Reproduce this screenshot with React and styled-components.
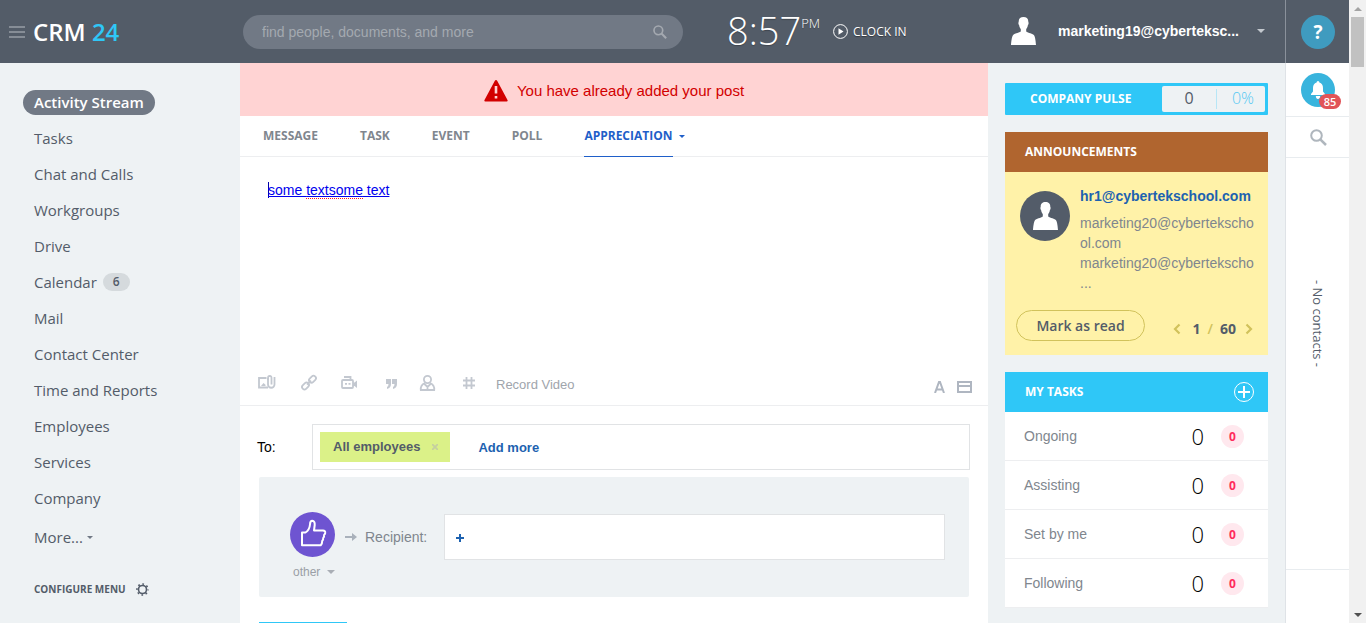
import React from "react";
import styled, { createGlobalStyle, css } from "styled-components";

const sans = `"Open Sans", "Noto Sans", sans-serif`;
const arial = `"Liberation Sans", Arial, sans-serif`;

const Global = createGlobalStyle`
  *, *::before, *::after { box-sizing: border-box; }
  body { margin: 0; background: #eef2f4; font-family: ${sans}; color: #535c69; }
  button { border: 0; padding: 0; background: none; font: inherit; color: inherit; cursor: pointer; }
  a { color: inherit; text-decoration: none; }
  h2 { margin: 0; }
  svg { display: block; flex: none; }
`;

const Window = styled.div`
  display: grid;
  grid-template-columns: minmax(0, 1fr) 64px 17px;
  grid-template-rows: minmax(0, 1fr);
  height: 100vh;
  overflow: hidden;
`;

const Portal = styled.div`
  display: flex;
  flex-direction: column;
  min-height: 0;
`;

/* Header */
const Header = styled.header`
  display: flex;
  align-items: center;
  flex: none;
  height: 63px;
  background: #535c68;
  color: #fff;
`;

const Brand = styled.div`
  display: flex;
  align-items: center;
  gap: 8px;
  width: 243px;
  padding-left: 9px;
`;

const Logo = styled.a`
  font-size: 24px;
  line-height: 32px;
  font-weight: 600;
  span { color: #2fc7f7; }
`;

const Search = styled.label`
  display: flex;
  align-items: center;
  width: 440px;
  height: 34px;
  padding: 0 16px 0 19px;
  border-radius: 17px;
  background: #717985;
  input {
    flex: 1;
    min-width: 0;
    padding: 0;
    border: 0;
    outline: 0;
    background: none;
    color: #fff;
    font: 14px/18px ${arial};
  }
  input::placeholder { color: #a4a9b0; opacity: 1; }
`;

const Clock = styled.div`
  display: flex;
  align-items: flex-start;
  width: 150px;
  padding: 0 0 4px 44px;
  text-shadow: 0 1px 1px rgba(0, 0, 0, 0.25);
`;

const Time = styled.span`
  font-size: 38px;
  line-height: 60px;
  font-weight: 300;
`;

const Meridiem = styled.span`
  padding-top: 14px;
  font-size: 13px;
  line-height: 18px;
  font-weight: 300;
`;

const ClockIn = styled.button`
  display: flex;
  align-items: center;
  gap: 5px;
  font-size: 12px;
  line-height: 18px;
  text-shadow: 0 1px 1px rgba(0, 0, 0, 0.4);
`;

const User = styled.button`
  display: flex;
  align-items: center;
  margin-left: auto;
  padding: 0 20px 2px 0;
  font: bold 14px/18px ${arial};
`;

const UserName = styled.span`
  min-width: 184px;
  margin: 0 15px 0 22px;
  text-align: left;
`;

/* Columns */
const Columns = styled.div`
  display: grid;
  grid-template-columns: 240px minmax(0, 1fr) 297px;
  grid-template-rows: minmax(0, 1fr);
  flex: 1;
  min-height: 0;
`;

const Menu = styled.nav`
  padding: 21px 23px;
`;

const MenuItem = styled.a`
  display: flex;
  align-items: center;
  width: max-content;
  height: 36px;
  padding-left: 11px;
  font-size: 15px;
  line-height: 25px;
`;

const ActiveLabel = styled.span`
  margin-left: -11px;
  padding: 0 11px;
  border-radius: 13px;
  background: #717985;
  color: #fff;
  font-weight: 600;
`;

const Counter = styled.span`
  margin-left: 6px;
  padding: 0 10px;
  border-radius: 9px;
  background: #d5dadd;
  font-size: 12px;
  line-height: 18px;
  font-weight: 600;
`;

const MoreItem = styled(MenuItem)`
  gap: 4px;
  margin-top: 3px;
`;

const Configure = styled.button`
  display: flex;
  align-items: center;
  gap: 10px;
  margin-top: 25px;
  padding-left: 11px;
  font-size: 10px;
  line-height: 18px;
  font-weight: 700;
`;

const Main = styled.main`
  overflow: hidden;
  background: #fff;
`;

const Alert = styled.div`
  display: flex;
  align-items: center;
  justify-content: center;
  gap: 9px;
  height: 53px;
  padding-top: 2px;
  background: #ffd3d3;
  color: #d20000;
  font: 15px/20px ${arial};
`;

const Tabs = styled.div`
  display: flex;
  align-items: flex-start;
  gap: 42px;
  height: 41px;
  padding-left: 23px;
  border-bottom: 1px solid #edeef0;
`;

const Tab = styled.button`
  display: flex;
  align-items: center;
  height: 41px;
  border-bottom: 1px solid transparent;
  color: #80868e;
  font-size: 12px;
  line-height: 18px;
  font-weight: 700;
  ${(p) => p.$active && css`
    color: #1f5fc9;
    border-color: #1f5fc9;
  `}
`;

const TabGroup = styled.div`
  display: flex;
  align-items: center;
  gap: 6px;
`;

const Editor = styled.div`
  height: 204px;
  padding: 24px 28px;
  outline: 0;
  font: 14px/18px ${arial};
  a { color: #0000ee; text-decoration: underline; text-decoration-skip-ink: none; }
`;

const Caret = styled.span`
  border-left: 1px solid #0000aa;
  margin-right: -1px;
`;

const Misspelt = styled.span`
  border-bottom: 1px dotted #ff2020;
`;

const Tools = styled.div`
  display: flex;
  align-items: center;
  height: 45px;
  padding: 0 16px 0 18px;
  border-bottom: 1px solid #edeef0;
  color: #c3c8d0;
`;

const ToolList = styled.div`
  display: flex;
  align-items: center;
  justify-content: space-between;
  width: 217px;
`;

const RecordVideo = styled.button`
  margin-left: 21px;
  padding-top: 4px;
  color: #a0a5ac;
  font: 13px/18px ${arial};
`;

const ToolsRight = styled.div`
  display: flex;
  align-items: center;
  gap: 12px;
  margin-left: auto;
  padding-top: 8px;
  color: #afb6c1;
`;

const ToRow = styled.div`
  display: flex;
  align-items: center;
  padding: 18px 18px 7px 17px;
  color: #000;
  font: 14px/18px ${arial};
`;

const ToLabel = styled.span`
  width: 55px;
`;

const Field = styled.div`
  display: flex;
  align-items: center;
  flex: 1;
  height: 46px;
  padding: 0 7px;
  border: 1px solid #e1e3e5;
  background: #fff;
`;

const Chip = styled.span`
  display: flex;
  align-items: center;
  gap: 12px;
  height: 30px;
  padding: 0 12px 0 13px;
  background: #dbf188;
  color: #535c69;
  font: bold 13px/18px ${arial};
`;

const AddLink = styled.button`
  margin-left: ${(p) => (p.$first ? "4px" : "28px")};
  padding-top: 2px;
  color: #1d62b0;
  font: bold 13px/18px ${arial};
`;

const Appreciation = styled.section`
  display: flex;
  align-items: flex-start;
  height: 120px;
  margin: 0 19px;
  padding: 35px 24px 0 31px;
  border-radius: 2px;
  background: #eef2f4;
`;

const Medal = styled.button`
  display: flex;
  flex-direction: column;
  gap: 6px;
  width: 45px;
  color: #9a9fa6;
  font: 12px/18px ${arial};
`;

const MedalName = styled.span`
  display: flex;
  align-items: center;
  gap: 7px;
  padding-left: 3px;
`;

const RecipientLabel = styled.span`
  display: flex;
  align-items: center;
  gap: 8px;
  height: 50px;
  margin: 0 17px 0 10px;
  color: #80868e;
  font: 14px/18px ${arial};
`;

const RecipientField = styled(Field)`
  margin-top: 2px;
`;

const Submit = styled.button`
  display: block;
  width: 88px;
  height: 38px;
  margin: 25px 19px;
  background: #2fc7f7;
`;

/* Right column */
const Aside = styled.aside`
  display: flex;
  flex-direction: column;
  gap: 17px;
  padding: 20px 17px;
`;

const Pulse = styled.section`
  display: flex;
  align-items: center;
  justify-content: space-between;
  flex: none;
  height: 32px;
  padding: 0 3px 0 25px;
  background: #2fc7f7;
  border-radius: 1px;
  color: #fff;
`;

const WidgetTitle = styled.h2`
  font-size: 12px;
  line-height: 18px;
  font-weight: 700;
`;

const PulseBox = styled.div`
  display: grid;
  grid-template-columns: 54px 49px;
  height: 26px;
  border-radius: 2px;
  background: #eef2f4;
  color: #535c69;
  font-size: 16px;
  line-height: 24px;
  text-align: center;
`;

const PulseRate = styled.span`
  height: 20px;
  margin-top: 3px;
  padding-left: 4px;
  border-left: 1px solid #b7e6f6;
  color: #55c8f3;
  line-height: 18px;
  font-weight: 300;
`;

const WidgetHead = styled.div`
  display: flex;
  align-items: center;
  justify-content: space-between;
  height: 40px;
  padding: 0 14px 0 20px;
  background: ${(p) => p.$color};
  color: #fff;
`;

const Notice = styled.div`
  height: 183px;
  padding: 14px 11px 0;
  background: #fff2a8;
`;

const NoticeBody = styled.div`
  display: flex;
  gap: 10px;
  height: 124px;
  padding-left: 4px;
  font: 14px/20px ${arial};
  color: #80868e;
`;

const Avatar = styled.span`
  display: flex;
  align-items: center;
  justify-content: center;
  flex: none;
  width: 50px;
  height: 50px;
  margin-top: 5px;
  border-radius: 50%;
  background: #535c69;
`;

const Author = styled.a`
  display: block;
  margin-bottom: 7px;
  color: #1d62b0;
  font-weight: bold;
`;

const NoticeFoot = styled.div`
  display: flex;
  align-items: center;
  justify-content: space-between;
  padding-right: 4px;
`;

const ReadButton = styled.button`
  width: 129px;
  height: 31px;
  border: 1px solid #d1c25b;
  border-radius: 16px;
  font-size: 14px;
  line-height: 18px;
  font-weight: 600;
`;

const Pager = styled.div`
  display: flex;
  align-items: center;
  padding-top: 6px;
  color: #d1c25b;
  font-size: 14px;
  line-height: 18px;
  font-weight: 600;
`;

const PageCount = styled.span`
  display: flex;
  gap: 7px;
  margin: 0 9px 0 12px;
  b { color: #535c69; font-weight: 700; }
`;

const TaskRow = styled.a`
  display: flex;
  align-items: center;
  height: 49px;
  padding: 0 24px 0 19px;
  border-bottom: 1px solid #edeef0;
  background: #fff;
  color: #80868e;
  font: 14px/18px ${arial};
`;

const TaskCount = styled.span`
  margin: 0 17px 0 auto;
  color: #000;
  font: 300 22px/28px ${sans};
`;

const TaskBadge = styled.span`
  width: 23px;
  border-radius: 50%;
  background: #ffe8ee;
  color: #ff2b5c;
  text-align: center;
  font: 700 12px/23px ${sans};
`;

/* Messenger rail */
const Rail = styled.div`
  display: flex;
  flex-direction: column;
  align-items: stretch;
  min-height: 0;
  border-left: 1px solid #dfe3e7;
  background: #fff;
`;

const RailCell = styled.div`
  display: flex;
  align-items: center;
  justify-content: center;
  flex: none;
  height: ${(p) => p.$height};
  padding-left: 1px;
  border-bottom: 1px solid #e8ecef;
`;

const RailTop = styled(RailCell)`
  margin-left: -1px;
  border-left: 1px solid #8a919b;
  border-bottom: 0;
  background: #535c68;
`;

const Round = styled.button`
  position: relative;
  display: flex;
  align-items: center;
  justify-content: center;
  width: 34px;
  height: 34px;
  border-radius: 50%;
  background: ${(p) => p.$color};
  color: #fff;
  font-size: 19px;
  line-height: 34px;
  font-weight: 700;
`;

const Unread = styled.span`
  position: absolute;
  right: -6px;
  bottom: -2px;
  width: 22px;
  border-radius: 8px;
  background: #e15458;
  font-size: 11px;
  line-height: 15px;
  font-weight: 600;
`;

const Contacts = styled.div`
  display: flex;
  align-items: center;
  justify-content: center;
  flex: 1;
  min-height: 0;
  border-bottom: 1px solid #e8ecef;
  span {
    writing-mode: vertical-rl;
    padding-bottom: 79px;
    font-size: 13px;
    line-height: 18px;
  }
`;

const RailBottom = styled.div`
  flex: none;
  height: 53px;
`;

const ScrollTrack = styled.div`
  display: flex;
  flex-direction: column;
  align-items: center;
  background: #f1f1f1;
`;

const ScrollArrow = styled.div`
  display: flex;
  align-items: center;
  justify-content: center;
  width: 17px;
  height: 17px;
`;

const ScrollThumb = styled.div`
  width: 13px;
  height: 50px;
  margin-bottom: auto;
  background: #c1c1c1;
`;

/* Icons */
const Triangle = ({ w = 6, h = 3, color = "currentColor", up }) => (
  <svg width={w} height={h} viewBox="0 0 6 3" fill={color} aria-hidden="true">
    <path d={up ? "M0 3 3 0l3 3z" : "M0 0h6L3 3z"} />
  </svg>
);

const Person = ({ w, h }) => (
  <svg width={w} height={h} viewBox="0 0 25 28" fill="#fff" aria-hidden="true">
    <path d="M12.5 0C9.500 0 7.500 1.500 7.700 5c-.6.500-.3 2.600.4 3 .2 1.800.8 3 1.700 4v2.500C8 16 3 16.500 1.800 18.500.8 20 .2 25 0 28h25c-.2-3-.8-8-1.800-9.500C22 16.500 17 16 15.200 14.500V12c.9-1 1.500-2.200 1.700-4 .7-.4 1-2.500.4-3C17.500 1.500 15.500 0 12.500 0z" />
  </svg>
);

const Magnifier = ({ size, color, width = 2 }) => (
  <svg width={size} height={size} viewBox="0 0 17 17" fill="none" stroke={color} strokeWidth={width} aria-hidden="true">
    <circle cx="6.500" cy="6.500" r="5.300" />
    <path d="M10.300 10.300 16 16" strokeWidth={width + 0.5} />
  </svg>
);

const Chevron = ({ d }) => (
  <svg width="8" height="12" viewBox="0 0 8 12" fill="none" stroke="#d1c25b" strokeWidth="2.200" aria-hidden="true">
    <path d={d} />
  </svg>
);

const toolIcons = [
  ["Attach file", 18, <><path d="M8.500 3H1v9.500h9" /><path d="M3 11l2.500-3 2 1.800V11z" fill="currentColor" stroke="none" /><path d="M10 3v6.500a3 3 0 0 0 6.500 0V2" /><path d="M10 5V3.200q0-2.200 1.800-2.200t1.700 2.200V9.500" /></>],
  ["Link", 16, <><rect x="-3.800" y="-2.400" width="7.600" height="4.800" rx="2.200" transform="translate(4.500 11) rotate(-45)" /><rect x="-3.800" y="-2.400" width="7.600" height="4.800" rx="2.200" transform="translate(11.500 4.200) rotate(-45)" /><path d="M6 9.600l4-4" /></>],
  ["Video", 17, <><rect x="0" y="5" width="11" height="8" rx="1" /><path d="M2 2h6.500v2.500" /><path d="M11 7.500h1.500L15 5.500v7.500l-2.500-2H11z" fill="currentColor" stroke="none" /><path d="M3 8.800h2M6.500 8.800h2" /></>],
  ["Quote", 13, <path d="M2 4h5v5q0 4-4 5v-2q1.500-.7 1.500-3H2zM8 4h5v5q0 4-4 5v-2q1.500-.7 1.500-3H8z" fill="currentColor" stroke="none" />],
  ["Mention", 16, <><circle cx="5.500" cy="4.500" r="3.600" /><path d="M3 8Q-1.700 10-1.200 15h13.400Q12.700 10 8 8M2.500 9l3 3 3-3M5.500 12v3" /></>],
  ["Tag", 12, <path d="M3.500 2v12M8.500 2v12M0 5.500h12M0 10.500h12" />],
];

const ToolIcon = ({ label, w, children }) => (
  <button aria-label={label}>
    <svg width={w} height="16" viewBox={`0 0 ${w} 16`} fill="none" stroke="currentColor" strokeWidth="1.800" overflow="visible">
      {children}
    </svg>
  </button>
);

const menu = ["Tasks", "Chat and Calls", "Workgroups", "Drive", "Calendar", "Mail", "Contact Center", "Time and Reports", "Employees", "Services", "Company"];
const tabs = ["MESSAGE", "TASK", "EVENT", "POLL"];
const tasks = ["Ongoing", "Assisting", "Set by me", "Following"];

export default function App() {
  return (
    <>
      <Global />
      <Window>
        <Portal>
          <Header>
            <Brand>
              <button aria-label="Toggle menu">
                <svg width="16" height="12" viewBox="0 0 16 12" stroke="#868d96" strokeWidth="2">
                  <path d="M0 1h16M0 6h16M0 11h16" />
                </svg>
              </button>
              <Logo href="#">CRM <span>24</span></Logo>
            </Brand>
            <Search>
              <input aria-label="Search" placeholder="find people, documents, and more" />
              <Magnifier size={14} color="#a4a9b0" />
            </Search>
            <Clock>
              <Time>8:57</Time>
              <Meridiem>PM</Meridiem>
            </Clock>
            <ClockIn>
              <svg width="15" height="15" viewBox="0 0 15 15" fill="#fff" aria-hidden="true">
                <circle cx="7.500" cy="7.500" r="6.900" fill="none" stroke="#fff" />
                <path d="M5.500 4.200v6.600L10.500 7.500z" />
              </svg>
              CLOCK IN
            </ClockIn>
            <User>
              <Person w={25} h={28} />
              <UserName>marketing19@cyberteksc...</UserName>
              <Triangle w={8} h={4} color="#c3c8ce" />
            </User>
          </Header>
          <Columns>
            <Menu>
              <MenuItem href="#"><ActiveLabel>Activity Stream</ActiveLabel></MenuItem>
              {menu.map((name) => (
                <MenuItem href="#" key={name}>
                  {name}
                  {name === "Calendar" && <Counter>6</Counter>}
                </MenuItem>
              ))}
              <MoreItem href="#">More... <Triangle color="#717985" /></MoreItem>
              <Configure>
                CONFIGURE MENU
                <svg width="13" height="13" viewBox="0 0 13 13" fill="none" stroke="#535c69" aria-hidden="true">
                  <circle cx="6.500" cy="6.500" r="4" strokeWidth="1.600" />
                  <circle cx="6.500" cy="6.500" r="5.500" strokeWidth="1.600" strokeDasharray="1.700 2.620" strokeDashoffset=".85" />
                </svg>
              </Configure>
            </Menu>
            <Main>
              <Alert role="alert">
                <svg width="24" height="22" viewBox="0 0 24 22" fill="#d20000" aria-hidden="true">
                  <path d="M12 0q.8 0 1.300 1L23.500 20q.6 1.500-.8 1.500H1.300Q-.1 21.500.5 20L10.700 1Q11.200 0 12 0z" />
                  <path d="M12 6v7.500M12 16v2.600" stroke="#ffd3d3" strokeWidth="2.600" />
                </svg>
                You have already added your post
              </Alert>
              <Tabs>
                {tabs.map((name) => <Tab key={name}>{name}</Tab>)}
                <TabGroup>
                  <Tab $active>APPRECIATION</Tab>
                  <Triangle color="#1f5fc9" />
                </TabGroup>
              </Tabs>
              <Editor contentEditable suppressContentEditableWarning spellCheck={false} role="textbox" aria-label="Post text">
                <Caret /><a href="#">some <Misspelt>textsome</Misspelt> text</a>
              </Editor>
              <Tools>
                <ToolList>
                  {toolIcons.map(([label, w, art]) => <ToolIcon key={label} label={label} w={w}>{art}</ToolIcon>)}
                </ToolList>
                <RecordVideo>Record Video</RecordVideo>
                <ToolsRight>
                  <button aria-label="Text format">
                    <svg width="11" height="12" viewBox="0 0 11 12" fill="none" stroke="currentColor" strokeWidth="2">
                      <path d="M1 12 5 1h1l4 11M2.500 8.500h6" />
                    </svg>
                  </button>
                  <button aria-label="Topic">
                    <svg width="15" height="12" viewBox="0 0 15 12" fill="none" stroke="currentColor" strokeWidth="2">
                      <path d="M1 1h13v10H1zM1 5h13" />
                    </svg>
                  </button>
                </ToolsRight>
              </Tools>
              <ToRow>
                <ToLabel>To:</ToLabel>
                <Field>
                  <Chip>
                    All employees
                    <svg width="6" height="6" viewBox="0 0 6 6" stroke="#c5cfa0" strokeWidth="1.800" aria-hidden="true">
                      <path d="M0 0l6 6M6 0 0 6" />
                    </svg>
                  </Chip>
                  <AddLink>Add more</AddLink>
                </Field>
              </ToRow>
              <Appreciation>
                <Medal>
                  <svg width="45" height="45" viewBox="0 0 45 45" aria-hidden="true">
                    <circle cx="22.500" cy="22.500" r="22.500" fill="#6e54d1" />
                    <path d="M12 20.500h3.500Q19.500 18 20 12.500 20 8.800 22.300 8.800 25 9 24.700 13L24 18.500H33q2.500.2 2.200 2.500-.2 1.300-1.200 2 .5 1.800-.8 3 .2 1.800-1 3 .1 2.500-1.500 4.300H12z" fill="none" stroke="#fff" strokeWidth="2" strokeLinejoin="round" />
                  </svg>
                  <MedalName>other <Triangle w={8} h={4} color="#a9aeb5" /></MedalName>
                </Medal>
                <RecipientLabel>
                  <svg width="12" height="8" viewBox="0 0 12 8" aria-hidden="true">
                    <path d="M0 3h7V0l5 4-5 4V5H0z" fill="#a9b1bb" />
                  </svg>
                  Recipient:
                </RecipientLabel>
                <RecipientField>
                  <AddLink $first aria-label="Add recipient">
                    <svg width="8" height="8" viewBox="0 0 8 8" stroke="#1d62b0" strokeWidth="2">
                      <path d="M4 0v8M0 4h8" />
                    </svg>
                  </AddLink>
                </RecipientField>
              </Appreciation>
              <Submit aria-label="Send" />
            </Main>
            <Aside>
              <Pulse>
                <WidgetTitle>COMPANY PULSE</WidgetTitle>
                <PulseBox><span>0</span><PulseRate>0%</PulseRate></PulseBox>
              </Pulse>
              <section>
                <WidgetHead $color="#b0652f"><WidgetTitle>ANNOUNCEMENTS</WidgetTitle></WidgetHead>
                <Notice>
                  <NoticeBody>
                    <Avatar><Person w={25} h={28} /></Avatar>
                    <div>
                      <Author href="#">hr1@cybertekschool.com</Author>
                      marketing20@cybertekscho<br />ol.com<br />marketing20@cybertekscho<br />...
                    </div>
                  </NoticeBody>
                  <NoticeFoot>
                    <ReadButton>Mark as read</ReadButton>
                    <Pager>
                      <button aria-label="Previous"><Chevron d="M6.500 1.500 2 6l4.500 4.500" /></button>
                      <PageCount><b>1</b><span>/</span><b>60</b></PageCount>
                      <button aria-label="Next"><Chevron d="M1.500 1.500 6 6l-4.500 4.500" /></button>
                    </Pager>
                  </NoticeFoot>
                </Notice>
              </section>
              <section>
                <WidgetHead $color="#2fc7f7">
                  <WidgetTitle>MY TASKS</WidgetTitle>
                  <button aria-label="Add task">
                    <svg width="20" height="20" viewBox="0 0 20 20" fill="none" stroke="#fff">
                      <circle cx="10" cy="10" r="9.500" />
                      <path d="M10 4v12M4 10h12" strokeWidth="2" />
                    </svg>
                  </button>
                </WidgetHead>
                {tasks.map((name) => (
                  <TaskRow href="#" key={name}>
                    {name}
                    <TaskCount>0</TaskCount>
                    <TaskBadge>0</TaskBadge>
                  </TaskRow>
                ))}
              </section>
            </Aside>
          </Columns>
        </Portal>
        <Rail>
          <RailTop $height="63px">
            <Round $color="#3f9bbf" aria-label="Help">?</Round>
          </RailTop>
          <RailCell $height="54px">
            <Round $color="#38b4dd" aria-label="Notifications">
              <svg width="14" height="18" viewBox="0 0 14 18" fill="#fff" aria-hidden="true">
                <path d="M7 0q1.400 0 1.400 1.500Q12 2.500 12 7v3.500L14 13v1H0v-1l2-2.500V7q0-4.500 3.600-5.500Q5.600 0 7 0zM4.800 15h4.400Q9 18 7 18t-2.200-3z" />
              </svg>
              <Unread>85</Unread>
            </Round>
          </RailCell>
          <RailCell $height="41px">
            <button aria-label="Find contact"><Magnifier size={17} color="#afb6bd" /></button>
          </RailCell>
          <Contacts><span>- No contacts -</span></Contacts>
          <RailBottom />
        </Rail>
        <ScrollTrack aria-hidden="true">
          <ScrollArrow><Triangle w={8} h={4} up color="#a3a3a3" /></ScrollArrow>
          <ScrollThumb />
          <ScrollArrow><Triangle w={8} h={4} color="#505050" /></ScrollArrow>
        </ScrollTrack>
      </Window>
    </>
  );
}
